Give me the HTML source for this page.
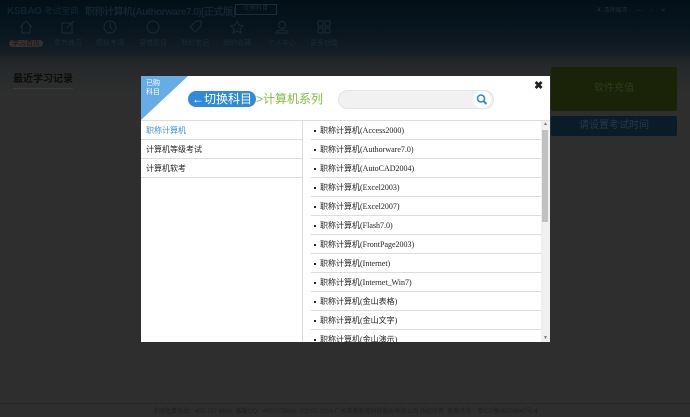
<!DOCTYPE html>
<html><head><meta charset="utf-8"><style>
*{margin:0;padding:0;box-sizing:border-box}
body{width:690px;height:417px;overflow:hidden;background:#2e2e2e;font-family:"Liberation Sans","Noto Sans CJK SC",sans-serif;position:relative}
.top{position:absolute;left:0;top:0;width:690px;height:62px;background:linear-gradient(#031018,#06141e 40%,#121c24 80%,#242729);}
.grad{position:absolute;left:0;top:62px;width:690px;height:30px;background:linear-gradient(#24272a,#2e2e2e)}
.t{position:absolute;white-space:nowrap}
.nav{position:absolute;top:20px;width:40px;height:32px;text-align:center;color:#1c2a34;font-size:7px}
.nav svg{display:block;margin:0 auto 4px}
.modal{position:absolute;left:141px;top:76px;width:409px;height:266px;background:#fff;overflow:hidden}
.row{position:absolute;left:0;width:161px;height:19px;border-bottom:1px solid #ddd;font-size:8px;line-height:19px;padding-left:5px;color:#222}
.it{position:absolute;left:170px;width:230px;height:19px;border-bottom:1px solid #ddd;font-size:8px;line-height:19px;padding-left:9px;color:#222;font-family:"Liberation Serif","Noto Sans CJK SC",serif}
.it:before{content:"";position:absolute;left:3px;top:9px;width:2px;height:2px;background:#222}
</style></head><body>
<div class="top"></div><div class="grad"></div>
<div class="t" style="left:7px;top:4px;font-size:10px;font-weight:bold;color:#122230;letter-spacing:-0.3px">KSBAO<span style="font-weight:normal;font-size:9px"> 考试宝典</span></div>
<div class="t" style="left:85px;top:3px;font-size:10px;font-weight:bold;color:#142430;letter-spacing:-0.5px">职称计算机(Authorware7.0)[正式版]</div>
<div class="t" style="left:235px;top:4px;width:42px;height:11px;border:1px solid #1a2c3a;font-size:6px;color:#1a2c3a;text-align:center;line-height:9px">切换科目</div>
<div class="t" style="left:596px;top:5px;font-size:6px;color:#1e2c36">▣ 清除缓存 &nbsp;&nbsp;&nbsp; — &nbsp;&nbsp;&nbsp; ▫ &nbsp;&nbsp;&nbsp; ✕</div>
<div class="nav" style="left:6px"><svg width="14" height="14" viewBox="0 0 14 14" fill="none" stroke="#1c2a34"><path d="M1 7L7 1l6 6M3 5v8h8V5"/></svg><span style="background:#35312f;color:#141414;border-radius:5px;padding:0 3px">学习首页</span></div>
<div class="nav" style="left:48px"><svg width="14" height="14" fill="none" stroke="#1c2a34"><rect x="1" y="3" width="10" height="10"/><path d="M6 8l7-7"/></svg>章节练习</div>
<div class="nav" style="left:90px"><svg width="14" height="14" fill="none" stroke="#1c2a34"><circle cx="7" cy="7" r="6"/><path d="M7 3v4l2 2"/></svg>模拟考场</div>
<div class="nav" style="left:133px"><svg width="14" height="14" fill="none" stroke="#1c2a34"><circle cx="7" cy="7" r="6"/></svg>易错题目</div>
<div class="nav" style="left:175px"><svg width="14" height="14" fill="none" stroke="#1c2a34"><path d="M2 7l6-6h5v5l-6 6z"/></svg>我的笔记</div>
<div class="nav" style="left:217px"><svg width="14" height="14" fill="none" stroke="#1c2a34"><path d="M7 1l2 4 4 1-3 3 1 4-4-2-4 2 1-4-3-3 4-1z"/></svg>我的收藏</div>
<div class="nav" style="left:262px"><svg width="14" height="14" fill="none" stroke="#1c2a34"><circle cx="7" cy="5" r="3.5"/><path d="M1 13c0-4 12-4 12 0z"/></svg>个人中心</div>
<div class="nav" style="left:304px"><svg width="14" height="14" fill="none" stroke="#1c2a34"><rect x="1" y="1" width="5" height="5"/><rect x="8" y="1" width="5" height="5"/><rect x="1" y="8" width="5" height="5"/><rect x="8" y="8" width="5" height="5"/></svg>更多功能</div>
<div class="t" style="left:13px;top:70px;font-size:10px;font-weight:bold;color:#0c0c0c;border-bottom:1px solid #3a3a3a;padding-bottom:3px">最近学习记录</div>
<div class="t" style="left:551px;top:67px;width:126px;height:44px;background:#1a2308;border-radius:2px;color:#2e3c18;font-size:10px;text-align:center;line-height:44px">软件充值</div>
<div class="t" style="left:551px;top:116px;width:126px;height:20px;background:#0a1c28;border-radius:2px;color:#263a48;font-size:10px;text-align:center;line-height:20px">请设置考试时间</div>
<div class="t" style="left:0;top:403px;width:690px;border-top:1px solid #272727;height:14px"></div>
<div class="t" style="left:153px;top:406px;font-size:6px;color:#202020">全国免费热线：400-727-8800 &nbsp;客服QQ：4007278800 &nbsp;©2003-2016 广州英腾教育科技股份有限公司 版权所有 &nbsp;备案信息：粤ICP备09009842号-4</div>

<div class="modal">
<svg style="position:absolute;left:0;top:0" width="47" height="44"><path d="M0 0H47L0 44Z" fill="#68ace6"/></svg>
<div class="t" style="left:5px;top:3px;font-size:7px;color:#fff;line-height:9px">已购<br>科目</div>
<div class="t" style="left:47px;top:15px;height:16px;padding:0 4px;background:#2f8ad8;border-radius:8px;color:#fff;font-size:12px;line-height:16px">←切换科目</div>
<div class="t" style="left:115px;top:15px;font-size:12px;color:#7cc13e;line-height:16px">&gt;计算机系列</div>
<div class="t" style="left:197px;top:14px;width:156px;height:19px;background:#f1f1f1;border:1px solid #e4e4e4;border-radius:10px"></div>
<div class="t" style="left:332px;top:15px;width:18px;height:17px;background:#fff;border-radius:9px"><svg width="18" height="17"><circle cx="8" cy="7.5" r="3.5" fill="none" stroke="#2f8ad8" stroke-width="1.6"/><path d="M10.5 10l3 3" stroke="#2f8ad8" stroke-width="2"/></svg></div>
<div class="t" style="left:393px;top:3px;font-size:11px;font-weight:bold;color:#222">✖</div>
<div style="position:absolute;left:0;top:44px;width:409px;border-top:1px solid #ddd"></div>
<div style="position:absolute;left:161px;top:44px;height:222px;border-left:1px solid #ddd"></div>
<div class="row" style="top:45px;color:#3d8fd8">职称计算机</div>
<div class="row" style="top:64px">计算机等级考试</div>
<div class="row" style="top:83px">计算机软考</div>
<div class="it" style="top:45px">职称计算机(Access2000)</div>
<div class="it" style="top:64px">职称计算机(Authorware7.0)</div>
<div class="it" style="top:83px">职称计算机(AutoCAD2004)</div>
<div class="it" style="top:102px">职称计算机(Excel2003)</div>
<div class="it" style="top:121px">职称计算机(Excel2007)</div>
<div class="it" style="top:140px">职称计算机(Flash7.0)</div>
<div class="it" style="top:159px">职称计算机(FrontPage2003)</div>
<div class="it" style="top:178px">职称计算机(Internet)</div>
<div class="it" style="top:197px">职称计算机(Internet_Win7)</div>
<div class="it" style="top:216px">职称计算机(金山表格)</div>
<div class="it" style="top:235px">职称计算机(金山文字)</div>
<div class="it" style="top:254px">职称计算机(金山演示)</div>
<div style="position:absolute;left:400px;top:45px;width:9px;height:221px;background:#f0f0f0"></div>
<div style="position:absolute;left:401px;top:54px;width:6px;height:92px;background:#c1c1c1"></div>
<div class="t" style="left:402px;top:45px;font-size:5px;color:#777">▲</div>
<div class="t" style="left:402px;top:259px;font-size:5px;color:#777">▼</div>
</div>
</body></html>
